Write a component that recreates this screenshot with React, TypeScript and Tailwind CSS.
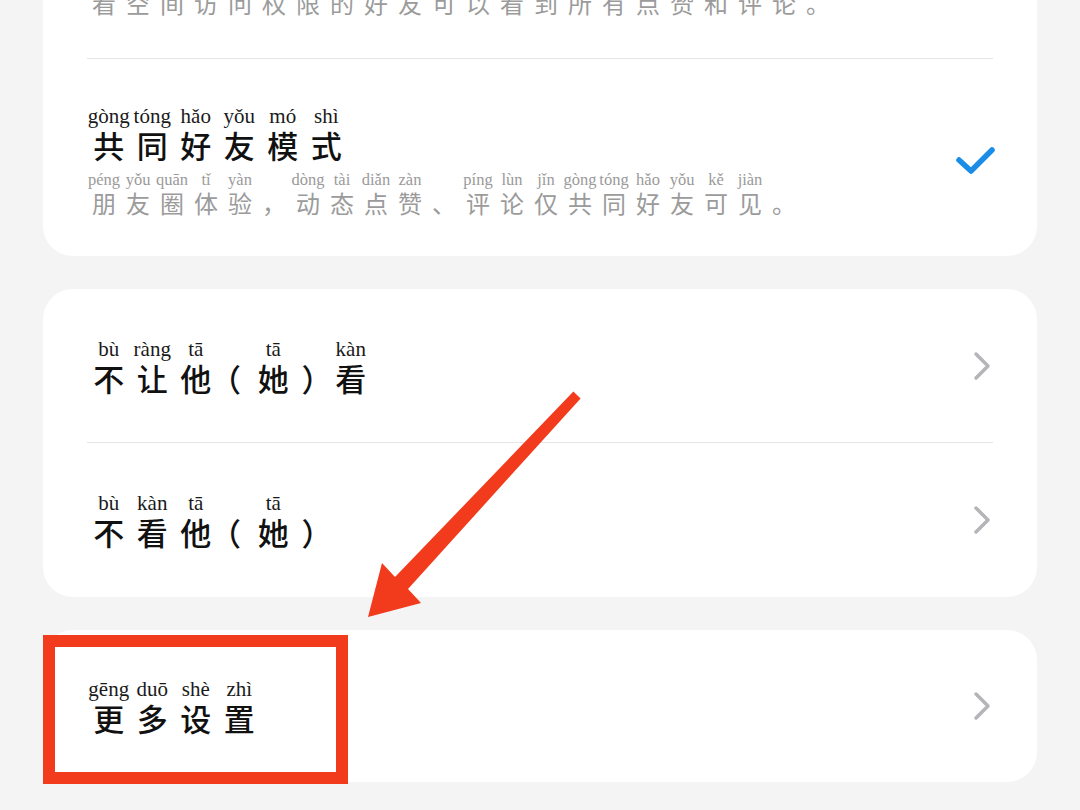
const PUNCT = '（），、。';

function Ruby({ zh, py, kind }: { zh: string; py: string[]; kind: 'title' | 'sub' }) {
  const chars = Array.from(zh);
  return (
    <div className="flex">
      {chars.map((c, i) => {
        const punct = PUNCT.includes(c);
        if (kind === 'title') {
          return (
            <div key={i} className={`flex flex-col items-center ${punct ? 'w-[34px]' : 'w-[43.5px]'}`}>
              <span className="whitespace-nowrap font-['Liberation_Serif',serif] text-[21px] leading-[24px] text-[#1a1a1a]">
                {py[i] || '\u00a0'}
              </span>
              <span
                className={`font-['Noto_Sans_CJK_SC',sans-serif] text-[31px] font-medium leading-[34px] text-[#111] ${
                  c === '（' ? '-translate-x-[9px]' : c === '）' ? 'translate-x-[5px]' : ''
                }`}
              >
                {c}
              </span>
            </div>
          );
        }
        return (
          <div key={i} className="flex w-[34px] flex-col items-center">
            <span className="whitespace-nowrap font-['Liberation_Serif',serif] text-[16.5px] leading-[18px] text-[#9a9a9a]">
              {py[i] || '\u00a0'}
            </span>
            <span className="font-['Noto_Sans_CJK_SC',sans-serif] text-[24px] leading-[28px] text-[#9b9b9b]">{c}</span>
          </div>
        );
      })}
    </div>
  );
}

function Chevron() {
  return (
    <svg width="18" height="30" viewBox="0 0 18 30" className="mr-[2px]">
      <polyline points="3,3 15,15 3,27" fill="none" stroke="#b4b4b9" strokeWidth="3.5" strokeLinecap="round" strokeLinejoin="round" />
    </svg>
  );
}

function Check() {
  return (
    <svg width="42" height="32" viewBox="0 0 42 32" className="-mr-[3px]">
      <polyline points="5,15 17,26 38,5" fill="none" stroke="#1b8de6" strokeWidth="5.5" strokeLinecap="round" strokeLinejoin="round" />
    </svg>
  );
}

function NavRow({ zh, py, className }: { zh: string; py: string[]; className: string }) {
  return (
    <div className={`flex items-center justify-between ${className}`}>
      <Ruby zh={zh} py={py} kind="title" />
      <Chevron />
    </div>
  );
}

export default function App() {
  return (
    <div className="relative h-[810px] w-[1080px] overflow-hidden bg-[#f4f4f4]">
      <div className="flex flex-col gap-[33px] px-[43px]">
        {/* visibility mode card, scrolled partly off the top */}
        <div className="-mt-[60px] rounded-[30px] bg-white px-[44px]">
          <div className="pb-[41px] pt-[31px]">
            <Ruby
              kind="sub"
              zh="看空间访问权限的好友可以看到所有点赞和评论。"
              py={['kàn', 'kōng', 'jiān', 'fǎng', 'wèn', 'quán', 'xiàn', 'de', 'hǎo', 'yǒu', 'kě', 'yǐ', 'kàn', 'dào', 'suǒ', 'yǒu', 'diǎn', 'zàn', 'hé', 'píng', 'lùn', '']}
            />
          </div>
          <div className="h-px bg-[#e6e6e6]" />
          <div className="flex items-center justify-between pb-[39px] pt-[45px]">
            <div className="flex flex-col gap-[9px]">
              <Ruby kind="title" zh="共同好友模式" py={['gòng', 'tóng', 'hǎo', 'yǒu', 'mó', 'shì']} />
              <Ruby
                kind="sub"
                zh="朋友圈体验，动态点赞、评论仅共同好友可见。"
                py={['péng', 'yǒu', 'quān', 'tǐ', 'yàn', '', 'dòng', 'tài', 'diǎn', 'zàn', '', 'píng', 'lùn', 'jǐn', 'gòng', 'tóng', 'hǎo', 'yǒu', 'kě', 'jiàn', '']}
              />
            </div>
            <Check />
          </div>
        </div>

        <div className="rounded-[30px] bg-white px-[44px]">
          <NavRow className="h-[153px]" zh="不让他（她）看" py={['bù', 'ràng', 'tā', '', 'tā', '', 'kàn']} />
          <div className="h-px bg-[#e6e6e6]" />
          <NavRow className="h-[154px]" zh="不看他（她）" py={['bù', 'kàn', 'tā', '', 'tā', '']} />
        </div>

        <div className="rounded-[30px] bg-white px-[44px]">
          <NavRow className="h-[152px]" zh="更多设置" py={['gēng', 'duō', 'shè', 'zhì']} />
        </div>
      </div>

      {/* annotation overlay */}
      <div className="pointer-events-none absolute left-[43px] top-[635px] h-[149px] w-[305px] border-[12px] border-[#f23b1c]" />
      <svg className="pointer-events-none absolute inset-0" width="1080" height="810">
        <polygon
          points="573.4,391.6 580.6,398.4 408,589 421,603 368,617 382,563 395,577"
          fill="#f23b1c"
        />
      </svg>
    </div>
  );
}
